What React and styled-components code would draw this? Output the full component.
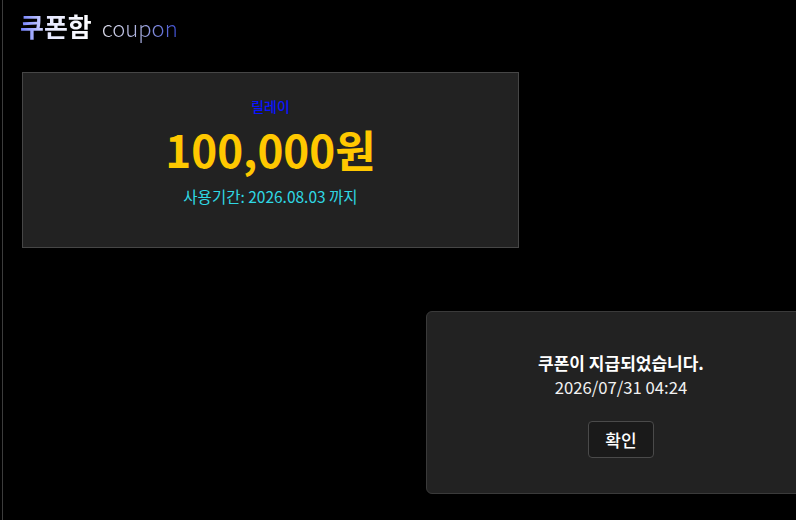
import React from "react";
import styled, { createGlobalStyle } from "styled-components";

const Global = createGlobalStyle`
  html, body { margin: 0; padding: 0; background: #000; }
  body {
    font-family: "Noto Sans CJK KR", "Noto Sans", sans-serif;
    color: #fff;
    overflow: hidden;
  }
`;

const Page = styled.div`
  position: relative;
  width: 796px;
  height: 520px;
  box-sizing: border-box;
  margin-left: 2px;
  border-left: 1px solid #3c3c3c;
  padding: 9px 0 0 19px;
`;

const Heading = styled.h1`
  margin: 0;
  display: flex;
  align-items: baseline;
  gap: 10px;
  line-height: 34px;
  margin-left: -2px;
`;

const HeadMain = styled.span`
  font-size: 26px;
  font-weight: 700;
  background: linear-gradient(90deg, #6f7dff 0%, #e6e8ff 40%, #ffffff 100%);
  -webkit-background-clip: text;
  background-clip: text;
  color: transparent;
`;

const HeadSub = styled.span`
  font-size: 22px;
  font-weight: 300;
  background: linear-gradient(90deg, #d8d8e6 0%, #aab0e0 50%, #3a4bd0 100%);
  -webkit-background-clip: text;
  background-clip: text;
  color: transparent;
`;

const CouponList = styled.div`
  margin-top: 28px;
  display: flex;
  flex-direction: column;
  gap: 16px;
`;

const CouponCard = styled.div`
  width: 497px;
  height: 176px;
  box-sizing: border-box;
  background: #222222;
  border: 1px solid #464646;
  display: flex;
  flex-direction: column;
  align-items: center;
  padding-top: 22px;
`;

const Brand = styled.div`
  font-size: 14px;
  line-height: 22px;
  font-weight: 500;
  color: #0a14ff;
`;

const Amount = styled.div`
  font-size: 44px;
  line-height: 52px;
  font-weight: 700;
  color: #ffc800;
  margin-top: 6px;
`;

const Expiry = styled.div`
  font-size: 15.5px;
  line-height: 22px;
  color: #2fd8e4;
  margin-top: 10px;
`;

const Toast = styled.div`
  position: absolute;
  left: 423px;
  top: 311px;
  width: 390px;
  height: 183px;
  box-sizing: border-box;
  background: #222222;
  border: 1px solid #3a3a3a;
  border-radius: 6px;
  display: flex;
  flex-direction: column;
  align-items: center;
  padding-top: 39px;
`;

const ToastTitle = styled.div`
  font-size: 17px;
  line-height: 24px;
  font-weight: 700;
  color: #fff;
`;

const ToastTime = styled.div`
  font-size: 16.7px;
  line-height: 24px;
  color: #f2f2f2;
`;

const ConfirmButton = styled.button`
  margin-top: 22px;
  width: 66px;
  height: 37px;
  padding: 0;
  background: #1a1a1a;
  border: 1px solid #4a4a4a;
  border-radius: 4px;
  color: #fff;
  font-family: inherit;
  font-size: 17px;
  font-weight: 500;
  cursor: pointer;
`;

const coupons = [
  { brand: "릴레이", amount: "100,000원", until: "2026.08.03" },
];

export default function App() {
  return (
    <>
      <Global />
      <Page>
        <Heading>
          <HeadMain>쿠폰함</HeadMain>
          <HeadSub>coupon</HeadSub>
        </Heading>
        <CouponList>
          {coupons.map((c) => (
            <CouponCard key={c.brand}>
              <Brand>{c.brand}</Brand>
              <Amount>{c.amount}</Amount>
              <Expiry>사용기간: {c.until} 까지</Expiry>
            </CouponCard>
          ))}
        </CouponList>
        <Toast>
          <ToastTitle>쿠폰이 지급되었습니다.</ToastTitle>
          <ToastTime>2026/07/31 04:24</ToastTime>
          <ConfirmButton>확인</ConfirmButton>
        </Toast>
      </Page>
    </>
  );
}
